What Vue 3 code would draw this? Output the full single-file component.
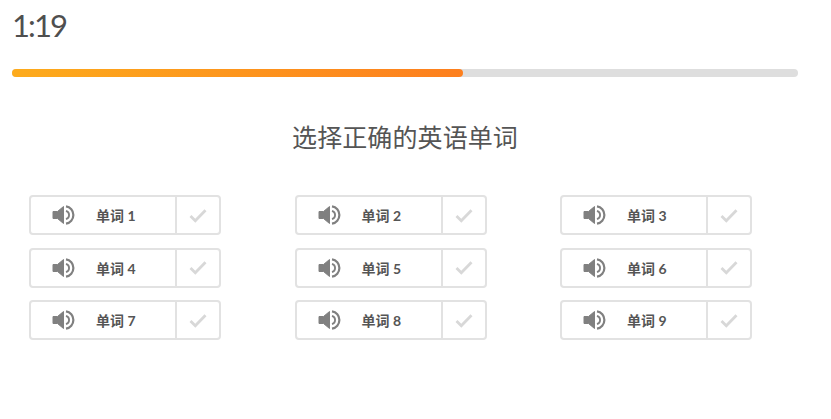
<template>
  <div class="page">
    <div class="timer">1:19</div>
    <div class="track">
      <div class="fill" :style="{ width: progress + 'px' }"></div>
    </div>
    <h1 class="title">选择正确的英语单词</h1>
    <div class="words">
      <div v-for="n in 9" :key="n" class="word">
        <div class="word-main">
          <svg class="speaker" width="24" height="20" viewBox="0 0 24 20">
            <path d="M1 6.5h4.5L11.5 1.5v17L5.5 13.5H1z" fill="#808080" stroke="#808080" stroke-width="1" stroke-linejoin="round" />
            <path d="M14 5.8a4.4 4.4 0 0 1 0 8.4" fill="none" stroke="#808080" stroke-width="1.8" />
            <path d="M14 1.4a8.7 8.7 0 0 1 0 17.2" fill="none" stroke="#808080" stroke-width="2.2" />
          </svg>
          <span class="label">单词 {{ n }}</span>
        </div>
        <div class="word-check">
          <svg width="18" height="15" viewBox="0 0 18 15">
            <path d="M1.5 8l4.8 4.8L16.5 2.2" fill="none" stroke="#d8d8d8" stroke-width="2.8" />
          </svg>
        </div>
      </div>
    </div>
  </div>
</template>

<script setup>
const progress = 451
</script>

<style scoped>
.page {
  height: 419px;
  padding: 0 33px 0 12px;
  box-sizing: border-box;
  background: #fff;
  font-family: Lato, "Noto Sans CJK SC", sans-serif;
  color: #4f4f4f;
  overflow: hidden;
}
.timer {
  padding-top: 7px;
  height: 69px;
  box-sizing: border-box;
  font-size: 31px;
  line-height: 36px;
  letter-spacing: -1.9px;
}
.track {
  height: 8px;
  border-radius: 4px;
  background: #dedede;
}
.fill {
  height: 100%;
  border-radius: 4px;
  background: linear-gradient(90deg, #fdab1c, #fd7f1e);
}
.title {
  margin: 42px 0 0;
  font-size: 25px;
  font-weight: 400;
  line-height: 36px;
  letter-spacing: 0.1px;
  text-align: center;
  color: #555;
}
.words {
  margin: 40px 0 0 17px;
  display: grid;
  grid-template-columns: repeat(3, 265.5px);
  row-gap: 12.5px;
}
.word {
  width: 192px;
  height: 40px;
  box-sizing: border-box;
  display: flex;
  border: 2px solid #e2e2e2;
  border-radius: 4px;
}
.word-main {
  width: 146px;
  box-sizing: border-box;
  display: flex;
  align-items: center;
  border-right: 2px solid #e2e2e2;
}
.speaker {
  margin-left: 21px;
}
.label {
  margin-left: 20px;
  font-size: 14px;
  font-weight: 700;
  color: #555;
}
.word-check {
  flex: 1;
  display: flex;
  align-items: center;
  justify-content: center;
}
</style>
